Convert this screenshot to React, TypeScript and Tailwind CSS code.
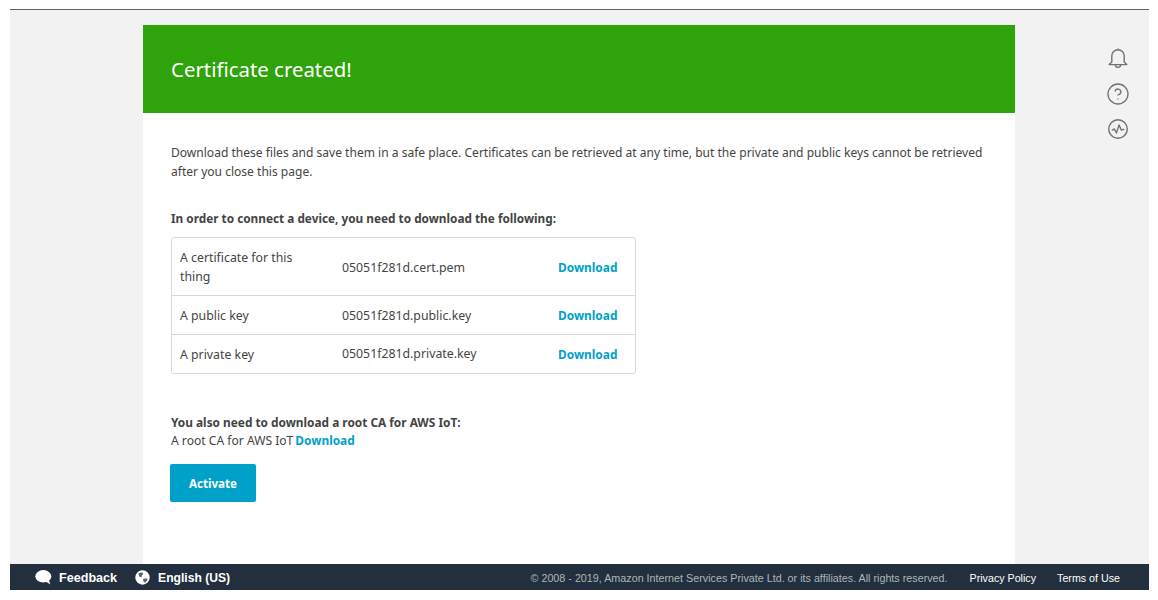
import { CircleHelp } from 'lucide-react';

const files = [
  { label: 'A certificate for this thing', name: '05051f281d.cert.pem', h: 'h-[58px]', nameNudge: 'mt-[3px]', linkNudge: 'mt-[3px]' },
  { label: 'A public key', name: '05051f281d.public.key', h: 'h-[39px]', nameNudge: 'mt-[2px]', linkNudge: 'mt-[1px]' },
  { label: 'A private key', name: '05051f281d.private.key', h: 'h-[38px]', nameNudge: 'mt-[1px]', linkNudge: 'mt-[1px]' },
];

function BellIcon() {
  return (
    <svg width="22" height="22" viewBox="0 0 22 22" fill="none" stroke="#6f7373" strokeWidth="1.4">
      <path d="M11 1.5v1.2M4.8 15V9a6.2 6.2 0 0 1 12.4 0v6l2.6 2.6H2.2z" strokeLinejoin="round" />
      <path d="M8.4 17.8a2.6 2.6 0 0 0 5.2 0" />
    </svg>
  );
}

function ActivityIcon() {
  return (
    <svg width="22" height="22" viewBox="0 0 22 22" fill="none" stroke="#6f7373" strokeWidth="1.4">
      <circle cx="11" cy="11" r="9.3" />
      <path d="M4.8 12.5l2.4-1.6 2.3 4 2.6-8 2.2 5.2 3-1" strokeLinejoin="round" />
    </svg>
  );
}

function BubbleIcon() {
  return (
    <svg width="17" height="15" viewBox="0 0 17 15" fill="#fff">
      <ellipse cx="8.3" cy="6.3" rx="8" ry="6.2" />
      <path d="M10 11l5.5 3.6-2-5z" />
    </svg>
  );
}

function GlobeIcon() {
  return (
    <svg width="15" height="15" viewBox="0 0 15 15">
      <circle cx="7.5" cy="7.5" r="7.2" fill="#fff" />
      <path d="M3.4 3.2l3.6-1 1.4 1.7-1.5 1.7-.4 2-2.4-1.1zM8 9l3.3-.7 1.5 1.5-2.8 3-1.3-.8z" fill="#232f3e" opacity="0.75" />
    </svg>
  );
}

export default function App() {
  return (
    <div className="h-[600px] w-[1158px] overflow-hidden bg-white pl-[10px] pr-[9px] pt-[9px] font-['Noto_Sans',sans-serif] text-[12.05px] text-[#444]">
      <div className="flex h-[581px] flex-col border-t border-[#5b6068]">
        <div className="flex min-h-0 flex-1 bg-[#f2f2f2] pt-[15px]">
          <div className="ml-[133px] w-[872px] bg-white">
            <div className="flex h-[88px] items-center bg-[#2ea30a] pl-[28px] text-[20.4px] text-white">Certificate created!</div>
            <div className="pl-[28px] pr-[20px] pt-[30px]">
              <p className="leading-[19px]">
                Download these files and save them in a safe place. Certificates can be retrieved at any time, but the private and public keys cannot be retrieved after you close this page.
              </p>
              <h2 className="mt-[28px] text-[11.8px] font-bold leading-[19px]">In order to connect a device, you need to download the following:</h2>
              <div className="mt-[9px] w-[465px] rounded-[3px] border border-[#d5dbdb]">
                {files.map((file) => (
                  <div key={file.name} className={`flex items-center border-b border-[#d5dbdb] pl-[8px] last:border-b-0 ${file.h}`}>
                    <div className="w-[162px] pr-[20px] text-[12.3px] leading-[19px]">{file.label}</div>
                    <div className={`w-[216px] text-[12.3px] ${file.nameNudge}`}>{file.name}</div>
                    <a className={`text-[11.9px] font-bold text-[#00a1c9] ${file.linkNudge}`}>Download</a>
                  </div>
                ))}
              </div>
              <h2 className="mt-[39px] text-[11.85px] font-bold leading-[19px]">You also need to download a root CA for AWS IoT:</h2>
              <p className="text-[12.1px] leading-[17px]">
                A root CA for AWS IoT<a className="ml-[2px] text-[11.9px] font-bold text-[#00a1c9]">Download</a>
              </p>
              <button type="button" className="-ml-[1px] mt-[15px] h-[38px] w-[86px] rounded-[2px] bg-[#00a1c9] pt-[1px] text-[11.6px] font-bold text-white">Activate</button>
            </div>
          </div>
          <div className="ml-[91px] flex w-[24px] flex-col items-center pt-[22px]">
            <BellIcon />
            <CircleHelp size={24} strokeWidth={1.3} color="#6f7373" className="mt-[13px]" />
            <div className="mt-[12px] h-[22px]"><ActivityIcon /></div>
          </div>
        </div>
        <div className="flex h-[26px] items-center bg-[#232f3e] pt-[2px] font-['Liberation_Sans',sans-serif] text-white">
          <div className="ml-[25px] flex items-center gap-[7px] text-[12.6px] font-bold"><BubbleIcon /><span>Feedback</span></div>
          <div className="ml-[18px] flex items-center gap-[8px] text-[12.1px] font-bold"><GlobeIcon /><span>English (US)</span></div>
          <div className="ml-auto text-[10.75px] text-[#aab7b8]">© 2008 - 2019, Amazon Internet Services Private Ltd. or its affiliates. All rights reserved.</div>
          <div className="ml-[22px] text-[10.7px]">Privacy Policy</div>
          <div className="ml-[21px] mr-[29px] text-[10.7px]">Terms of Use</div>
        </div>
      </div>
    </div>
  );
}
